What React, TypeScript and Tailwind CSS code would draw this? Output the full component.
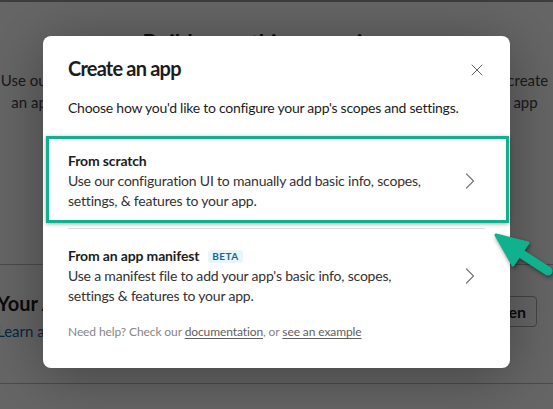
import { X, ChevronRight } from 'lucide-react';

function Option({
  title,
  badge,
  lines,
  highlighted,
}: {
  title: string;
  badge?: string;
  lines: string[];
  highlighted?: boolean;
}) {
  return (
    <div
      className={
        highlighted
          ? 'ml-[3px] mr-[1px] flex items-center border-[3px] border-[#10b18e] pl-[19px] pr-[22px] pt-[12px] pb-[9px] shadow-[0_1px_4px_rgba(0,0,0,0.35)]'
          : 'flex items-center pl-[25px] pr-[26px] pt-[17px]'
      }
    >
      <div className="flex-1">
        <div className="flex items-center gap-[9px] text-[14px] font-bold leading-[20px] tracking-[-0.15px] text-[#1d1c1d]">
          {title}
          {badge && (
            <span className="rounded-[3px] bg-[#e8f5fa] px-[4px] text-[10px] leading-[13px] tracking-[0.4px] text-[#1264a3]">
              {badge}
            </span>
          )}
        </div>
        {lines.map((l) => (
          <div key={l} className="text-[14px] leading-[20px] tracking-[-0.2px] text-[#333133]">
            {l}
          </div>
        ))}
      </div>
      <ChevronRight size={28} strokeWidth={1.1} className="text-[#7d7c7d]" />
    </div>
  );
}

export default function App() {
  return (
    <div className="relative h-[409px] w-[553px] overflow-hidden bg-white font-['Lato',sans-serif]">
      {/* Page behind the dialog */}
      <div className="flex h-full flex-col border-t-2 border-[#9a9a9a]">
        <div className="pt-[27px] pr-[24px] text-center text-[22px] font-bold leading-[28px] text-[#1d1c1d]">
          Build something amazing
        </div>
        <div className="mt-[12px] whitespace-nowrap pr-[4px] text-center text-[15px] leading-[22px] text-[#454245]">
          <div>Use our configuration UI or an app manifest to build an app from scratch and create</div>
          <div>an app that works for your team, or distribute it to others and share the new app</div>
        </div>
        <div className="mt-[151px] border-t border-[#bbb]" />
        <div className="mt-[25px] flex items-start justify-between">
          <div className="-ml-[3px]">
            <div className="text-[20px] font-bold leading-[26px] text-[#1d1c1d]">Your Apps</div>
            <div className="mt-[5px] text-[15px] leading-[20px] text-[#1264a3]">Learn about building apps</div>
          </div>
          <div className="mr-[16px] mt-[6px] h-[31px] rounded-[4px] border border-[#aaa] pl-[12px] pr-[10px] text-[16px] font-bold leading-[29px] text-[#1d1c1d]">
            Generate Token
          </div>
        </div>
        <div className="mt-[42px] border-t border-[#bbb]" />
      </div>

      {/* Overlay */}
      <div className="absolute inset-0 bg-black/60" />

      {/* Dialog */}
      <div className="absolute left-[43px] top-[36px] w-[467px] rounded-[8px] bg-white pb-[27px] shadow-[0_8px_60px_rgba(0,0,0,0.35)]">
        <div className="flex items-center justify-between pl-[25px] pr-[23px] pt-[18px]">
          <div className="text-[20px] font-bold leading-[28px] tracking-[-0.8px] text-[#1d1c1d]">Create an app</div>
          <X size={20} strokeWidth={1.2} className="mt-[3px] text-[#616061]" />
        </div>
        <div className="mt-[16px] px-[25px] text-[14px] leading-[20px] tracking-[-0.25px] text-[#1d1c1d]">
          Choose how you'd like to configure your app's scopes and settings.
        </div>
        <div className="mt-[18px]">
          <Option
            highlighted
            title="From scratch"
            lines={['Use our configuration UI to manually add basic info, scopes,', 'settings, & features to your app.']}
          />
        </div>
        <div className="mx-[25px] mt-[5px] border-t border-[#dddddd]" />
        <Option
          title="From an app manifest"
          badge="BETA"
          lines={["Use a manifest file to add your app's basic info, scopes,", 'settings & features to your app.']}
        />
        <div className="mt-[17px] px-[25px] text-[12px] leading-[18px] tracking-[-0.1px] text-[#868686]">
          Need help? Check our{' '}
          <span className="text-[#616061] underline underline-offset-2">documentation</span>, or{' '}
          <span className="text-[#616061] underline underline-offset-2">see an example</span>
        </div>
      </div>

      {/* Annotation arrow */}
      <svg
        className="absolute left-[486px] top-[226px] drop-shadow-[1px_2px_2px_rgba(0,0,0,0.45)]"
        width="67"
        height="56"
        viewBox="486 226 67 56"
      >
        <line x1="517" y1="251" x2="548" y2="271" stroke="#10b18e" strokeWidth="9" strokeLinecap="round" />
        <polygon
          points="496,235 528,243 513,265"
          fill="#10b18e"
          stroke="#10b18e"
          strokeWidth="3"
          strokeLinejoin="round"
        />
      </svg>
    </div>
  );
}
